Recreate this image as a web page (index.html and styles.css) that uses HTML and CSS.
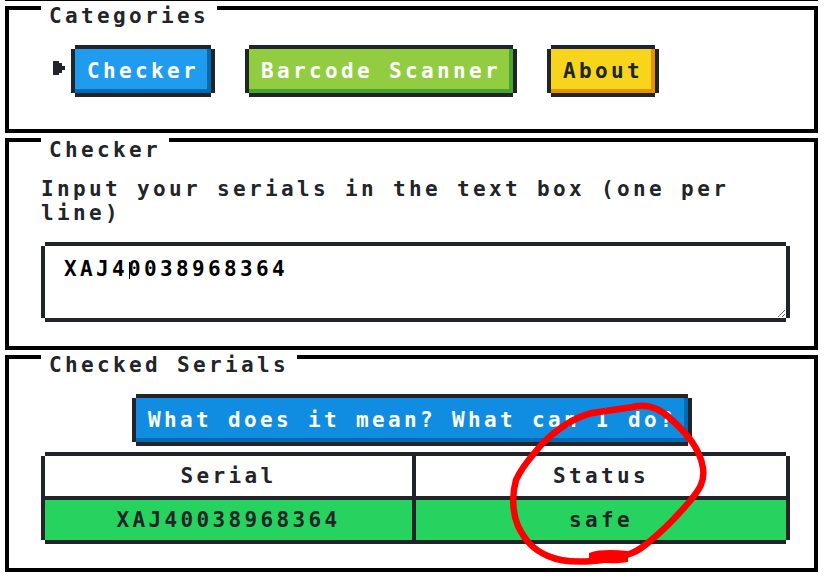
FILE: index.html
```html
<!DOCTYPE html>
<html>
  <head>
    <title>Serial Checker</title>
    <link rel="stylesheet" href="styles.css">
  </head>
  <body>
    <div class="topline"></div>

    <section class="box box-categories">
      <h3 class="title">Categories</h3>
      <div class="nav">
        <svg class="cursor" width="12" height="14" viewBox="0 0 12 14" shape-rendering="crispEdges">
          <path d="M0 0H6V2H9V5H12V9H9V12H6V14H0Z" fill="#212529"/>
        </svg>
        <div class="nav-items">
          <button class="btn btn-blue">Checker</button>
          <button class="btn btn-green">Barcode Scanner</button>
          <button class="btn btn-yellow">About</button>
        </div>
      </div>
    </section>

    <section class="box box-checker">
      <h3 class="title">Checker</h3>
      <p class="hint">Input your serials in the text box (one per line)</p>
      <div class="field">
        <textarea class="serials" spellcheck="false">XAJ40038968364</textarea>
        <span class="caret"></span>
      </div>
    </section>

    <section class="box box-checked">
      <h3 class="title">Checked Serials</h3>
      <div class="center">
        <button class="btn btn-dark">What does it mean? What can I do?</button>
      </div>
      <table class="results">
        <tr>
          <th>Serial</th>
          <th>Status</th>
        </tr>
        <tr class="safe">
          <td>XAJ40038968364</td>
          <td>safe</td>
        </tr>
      </table>
    </section>

    <svg class="scribble" width="826" height="576" viewBox="0 0 826 576">
      <path d="M633 407C648 403 660 408 672 420C686 433 700 448 703 468C705 482 699 490 690 501C678 515 664 530 650 541C638 552 628 556 608 559C590 562 566 564 548 556C532 549 525 540 518 526C512 512 512 494 516 480C522 466 532 456 542 444C556 430 572 418 592 413C606 411 620 409 633 407Z" fill="none" stroke="#f00" stroke-width="6.5"/>
      <path d="M589 553C600 549 615 550 628 551V562C615 564 600 564 589 560Z" fill="#f00"/>
    </svg>
  </body>
</html>
```

FILE: styles.css
```css
html, body {
  margin: 0;
  padding: 0;
  background: #fff;
}

body {
  position: relative;
  height: 576px;
  overflow: hidden;
  font-family: "DejaVu Sans Mono", "Liberation Mono", monospace;
  font-weight: bold;
  font-size: 21px;
  line-height: 24px;
  letter-spacing: 3.36px;
  color: #212529;
}

.topline {
  width: 813px;
  height: 1px;
  margin: 0 0 5px 5px;
  background: #000;
}

.box {
  box-sizing: border-box;
  width: 813px;
  margin: 0 0 5px 5px;
  padding: 0 24px 24px 32px;
  border: 4px solid #000;
}

.title {
  display: table;
  margin: -6px 0 0;
  padding: 0 8px;
  background: #fff;
  font-size: 21px;
  font-weight: bold;
}

.box-categories {
  height: 127px;
}

.box-categories .title {
  margin-bottom: 21px;
}

.box-checker {
  height: 212px;
}

.box-checker .title {
  margin-top: -4px;
}

.box-checked {
  height: 217px;
}

.nav {
  display: flex;
  align-items: flex-start;
  padding-left: 12px;
}

.cursor {
  margin: 12px 10px 0 0;
}

.nav-items {
  display: flex;
  gap: 38px;
}

.btn {
  display: block;
  height: 44px;
  margin: 0;
  padding: 0 12px;
  border: 0;
  font: inherit;
  letter-spacing: inherit;
  white-space: nowrap;
  color: #fff;
}

.btn-blue {
  background: #209cee;
  box-shadow: inset -4px -4px 0 #006bb3, 0 -4px 0 #212529, 0 4px 0 #212529, -4px 0 0 #212529, 4px 0 0 #212529;
}

.btn-green {
  background: #92cc41;
  box-shadow: inset -4px -4px 0 #4aa52e, 0 -4px 0 #212529, 0 4px 0 #212529, -4px 0 0 #212529, 4px 0 0 #212529;
}

.btn-yellow {
  background: #f7d51d;
  color: #212529;
  box-shadow: inset -4px -4px 0 #e59400, 0 -4px 0 #212529, 0 4px 0 #212529, -4px 0 0 #212529, 4px 0 0 #212529;
}

.btn-dark {
  background: #108de0;
  box-shadow: inset -4px -4px 0 #006bb3, 0 -4px 0 #212529, 0 4px 0 #212529, -4px 0 0 #212529, 4px 0 0 #212529;
}

.hint {
  margin: 15px 0 21px;
}

.field {
  position: relative;
  width: 741px;
  margin-left: 4px;
}

.serials {
  display: block;
  box-sizing: border-box;
  width: 741px;
  height: 72px;
  padding: 11px 19px 9px;
  border: 0;
  outline: 0;
  background: #fff;
  color: #000;
  font: inherit;
  letter-spacing: inherit;
  box-shadow: 0 -4px 0 #212529, 0 4px 0 #212529, -4px 0 0 #212529, 4px 0 0 #212529;
}

.caret {
  position: absolute;
  left: 84px;
  top: 16px;
  width: 1px;
  height: 17px;
  background: #000;
}

.center {
  display: flex;
  justify-content: center;
  margin: 21px 0 14px;
  padding-right: 7px;
}

.results {
  table-layout: fixed;
  width: 741px;
  margin-left: 4px;
  border-collapse: separate;
  border-spacing: 0;
  box-shadow: 0 -4px 0 #212529, 0 4px 0 #212529, -4px 0 0 #212529, 4px 0 0 #212529;
}

.results th, .results td {
  height: 40px;
  padding: 0;
  text-align: center;
  font-weight: bold;
}

.results th:first-child, .results td:first-child {
  width: 367px;
  border-right: 4px solid #212529;
}

.results th {
  border-bottom: 4px solid #212529;
}

.safe td {
  background: #26d35f;
}

.scribble {
  position: absolute;
  left: 0;
  top: 0;
  pointer-events: none;
}
```
